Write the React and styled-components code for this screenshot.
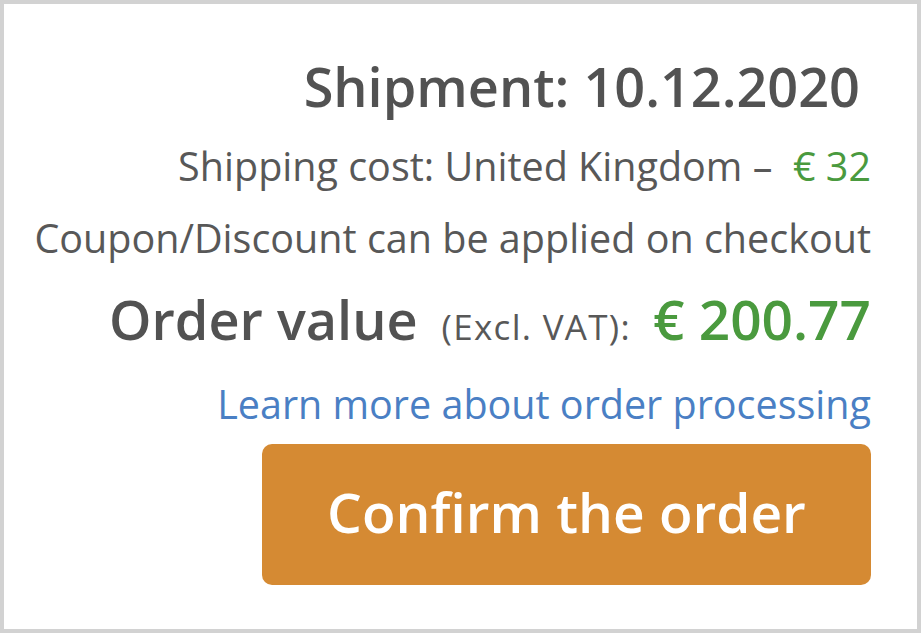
import React from "react";
import styled, { createGlobalStyle } from "styled-components";

const Global = createGlobalStyle`
  html, body { margin: 0; padding: 0; background: #fff; }
  body { font-family: "Open Sans", "Noto Sans", sans-serif; }
`;

const Frame = styled.div`
  box-sizing: border-box;
  width: 921px;
  height: 633px;
  border: 4px solid #d2d2d2;
  background: #fff;
  display: flex;
  flex-direction: column;
  align-items: flex-end;
  padding: 50px 46px 0 0;
  color: #555;
`;

const Title = styled.div`
  font-size: 54px;
  font-weight: 600;
  line-height: 64px;
  margin-right: 11px;
  color: #525252;
  white-space: nowrap;
`;

const Line = styled.div`
  font-size: 39.5px;
  line-height: 46px;
  margin-top: ${(p) => p.$mt || 0}px;
  color: #585858;
  white-space: nowrap;
`;

const Price = styled.span`
  color: #4a9a3e;
  font-weight: ${(p) => (p.$bold ? 600 : 400)};
  font-size: ${(p) => p.$size || 39.5}px;
`;

const OrderRow = styled.div`
  display: flex;
  align-items: baseline;
  margin-top: 26px;
  white-space: nowrap;
  line-height: 64px;
`;

const OrderLabel = styled.span`
  font-size: 54px;
  font-weight: 600;
  color: #525252;
`;

const Excl = styled.span`
  font-size: 35px;
  letter-spacing: 1.3px;
  color: #585858;
  margin: 0 22px 0 24px;
`;

const Link = styled.a`
  font-size: 39.5px;
  line-height: 46px;
  color: #4a7fc4;
  text-decoration: none;
  margin-top: 22px;
  white-space: nowrap;
`;

const Button = styled.button`
  margin-top: 17px;
  width: 609px;
  height: 141px;
  border: none;
  border-radius: 10px;
  background: #d58a33;
  color: #fff;
  font-family: "Open Sans", "Noto Sans", sans-serif;
  font-size: 55px;
  font-weight: 600;
  padding: 0 0 6px;
  cursor: pointer;
`;

export default function App() {
  return (
    <>
      <Global />
      <Frame>
        <Title>Shipment: 10.12.2020</Title>
        <Line $mt={25}>
          Shipping cost: United Kingdom –&nbsp; <Price>€ 32</Price>
        </Line>
        <Line $mt={26}>Coupon/Discount can be applied on checkout</Line>
        <OrderRow>
          <OrderLabel>Order value</OrderLabel>
          <Excl>(Excl. VAT):</Excl>
          <Price $bold $size={55}>€ 200.77</Price>
        </OrderRow>
        <Link href="#">Learn more about order processing</Link>
        <Button>Confirm the order</Button>
      </Frame>
    </>
  );
}
